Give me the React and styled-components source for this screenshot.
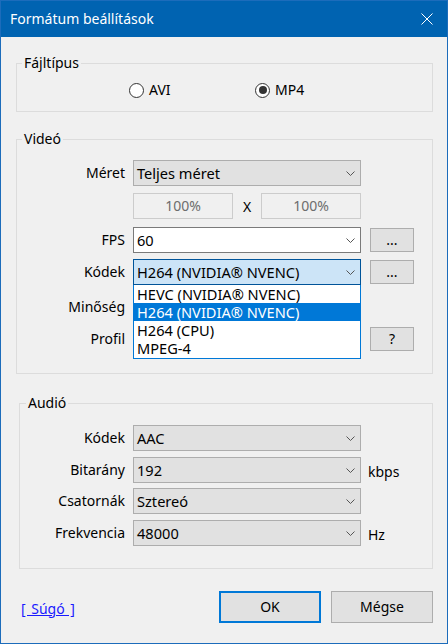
import React from 'react';
import styled, { createGlobalStyle } from 'styled-components';

const GlobalStyle = createGlobalStyle`
  html, body { margin: 0; padding: 0; background: #f0f0f0; }
  body {
    font-family: "Noto Sans", "DejaVu Sans", sans-serif;
    font-size: 14px;
    color: #000;
  }
  * { box-sizing: border-box; }
`;

const Window = styled.div`
  width: 448px;
  height: 644px;
  border: 1px solid #1c6cbb;
  background: #f0f0f0;
  display: flex;
  flex-direction: column;
`;

const TitleBar = styled.div`
  height: 36px;
  flex: none;
  background: #0063b1;
  display: flex;
  align-items: center;
  padding-left: 9px;
  color: #fff;
`;

const Title = styled.div`
  flex: 1;
  font-size: 14px;
  line-height: 18px;
`;

const CloseButton = styled.div`
  width: 40px;
  height: 36px;
  display: flex;
  align-items: center;
  justify-content: center;
`;

const Body = styled.div`
  flex: 1;
  padding: 18px 14px 0 15px;
  display: flex;
  flex-direction: column;
`;

const Group = styled.fieldset`
  margin: ${p => p.$top || 0}px 0 0 ${p => p.$inset || 0}px;
  padding: ${p => p.$pt}px 0 ${p => p.$pb}px 0;
  border: 1px solid #dcdcdc;
  min-width: 0;
`;

const Legend = styled.legend`
  margin-left: ${p => p.$offset}px;
  padding: 0 2px;
  line-height: 16px;
  font-size: 14px;
`;

const RadioRow = styled.div`
  display: grid;
  grid-template-columns: 126px 126px;
  padding-left: 112px;
  height: 16px;
`;

const RadioItem = styled.label`
  display: flex;
  align-items: center;
  gap: 5px;
  line-height: 16px;
`;

const RadioCircle = styled.span`
  width: 15px;
  height: 15px;
  border-radius: 50%;
  border: 1px solid #333;
  background: #fff;
  display: flex;
  align-items: center;
  justify-content: center;
  &::after {
    content: "";
    width: 8px;
    height: 8px;
    border-radius: 50%;
    background: ${p => (p.$checked ? '#333' : 'transparent')};
  }
`;

const Row = styled.div`
  display: grid;
  grid-template-columns: ${p => p.$labelWidth}px 228px auto;
  column-gap: 7px;
  height: 26px;
  margin-top: ${p => p.$mt || 0}px;
`;

const Label = styled.div`
  text-align: right;
  padding-right: 1px;
  align-self: center;
  line-height: 18px;
  white-space: nowrap;
`;

const selectVariants = {
  gray: { bg: '#e1e1e1', border: '#adadad' },
  white: { bg: '#ffffff', border: '#7a7a7a' },
  focus: { bg: '#cce4f7', border: '#005499' },
};

const SelectBox = styled.div`
  position: relative;
  height: 26px;
  display: flex;
  align-items: center;
  justify-content: space-between;
  padding: 0 5px 0 3px;
  border: 1px solid ${p => selectVariants[p.$variant].border};
  background: ${p => selectVariants[p.$variant].bg};
  line-height: 18px;
  font-size: 14.6px;
`;

const DropList = styled.div`
  position: absolute;
  left: -1px;
  right: -1px;
  top: calc(100% + 1px);
  background: #fff;
  border: 1px solid #0078d7;
  border-top: none;
  padding-bottom: 1px;
  z-index: 2;
`;

const DropItem = styled.div`
  height: 18px;
  line-height: 18px;
  padding-left: 3px;
  background: ${p => (p.$selected ? '#0078d7' : 'transparent')};
  color: ${p => (p.$selected ? '#fff' : '#000')};
  white-space: nowrap;
`;

const SizePair = styled.div`
  display: grid;
  grid-template-columns: 100px 1fr 100px;
  align-items: center;
`;

const Edit = styled.div`
  height: 26px;
  border: 1px solid #cccccc;
  background: #f0f0f0;
  color: #6d6d6d;
  display: flex;
  align-items: center;
  justify-content: center;
  line-height: 18px;
`;

const Times = styled.div`
  text-align: center;
  line-height: 18px;
  padding-top: 2px;
`;

const SmallButton = styled.div`
  width: 44px;
  height: 24px;
  margin: 1px 0 0 2px;
  border: 1px solid #adadad;
  background: #e1e1e1;
  display: flex;
  align-items: center;
  justify-content: center;
  line-height: 18px;
`;

const Unit = styled.div`
  align-self: center;
  line-height: 18px;
  padding-top: 3px;
`;

const Footer = styled.div`
  display: flex;
  align-items: center;
  margin-top: 22px;
`;

const HelpLink = styled.a`
  margin: 3px 0 0 5px;
  color: #1a1aff;
  text-decoration: underline;
  line-height: 18px;
  word-spacing: 2px;
  cursor: pointer;
`;

const Buttons = styled.div`
  margin-left: auto;
  display: flex;
  gap: 10px;
`;

const DialogButton = styled.div`
  width: 102px;
  height: 32px;
  display: flex;
  align-items: center;
  justify-content: center;
  background: #e1e1e1;
  border: ${p => (p.$default ? '2px solid #0078d7' : '1px solid #adadad')};
  line-height: 18px;
`;

const Chevron = () => (
  <svg width="9" height="5" viewBox="0 0 9 5">
    <path d="M0.5 0.5 L4.5 4.5 L8.5 0.5" fill="none" stroke="#555" strokeWidth="1" />
  </svg>
);

const Select = ({ value, variant = 'gray', children }) => (
  <SelectBox $variant={variant}>
    <span>{value}</span>
    <Chevron />
    {children}
  </SelectBox>
);

const codecs = ['HEVC (NVIDIA® NVENC)', 'H264 (NVIDIA® NVENC)', 'H264 (CPU)', 'MPEG-4'];

export default function App() {
  const V = 109;
  const A = 106;
  return (
    <>
      <GlobalStyle />
      <Window>
        <TitleBar>
          <Title>Formátum beállítások</Title>
          <CloseButton>
            <svg width="12" height="12" viewBox="0 0 12 12">
              <path d="M0.5 0.5 L11.5 11.5 M11.5 0.5 L0.5 11.5" stroke="#fff" strokeWidth="1" />
            </svg>
          </CloseButton>
        </TitleBar>
        <Body>
          <Group $pt={11} $pb={13}>
            <Legend $offset={5}>Fájltípus</Legend>
            <RadioRow>
              <RadioItem><RadioCircle />AVI</RadioItem>
              <RadioItem><RadioCircle $checked />MP4</RadioItem>
            </RadioRow>
          </Group>

          <Group $top={19} $pt={13} $pb={21}>
            <Legend $offset={5}>Videó</Legend>
            <Row $labelWidth={V}>
              <Label>Méret</Label>
              <Select value="Teljes méret" />
            </Row>
            <Row $labelWidth={V} $mt={7}>
              <span />
              <SizePair>
                <Edit>100%</Edit>
                <Times>X</Times>
                <Edit>100%</Edit>
              </SizePair>
            </Row>
            <Row $labelWidth={V} $mt={8}>
              <Label>FPS</Label>
              <Select value="60" variant="white" />
              <SmallButton>...</SmallButton>
            </Row>
            <Row $labelWidth={V} $mt={6}>
              <Label>Kódek</Label>
              <Select value="H264 (NVIDIA® NVENC)" variant="focus">
                <DropList>
                  {codecs.map((c, i) => (
                    <DropItem key={c} $selected={i === 1}>{c}</DropItem>
                  ))}
                </DropList>
              </Select>
              <SmallButton>...</SmallButton>
            </Row>
            <Row $labelWidth={V} $mt={9}>
              <Label>Minőség</Label>
            </Row>
            <Row $labelWidth={V} $mt={6}>
              <Label>Profil</Label>
              <span />
              <SmallButton>?</SmallButton>
            </Row>
          </Group>

          <Group $top={21} $inset={3} $pt={14} $pb={22}>
            <Legend $offset={6}>Audió</Legend>
            <Row $labelWidth={A}>
              <Label>Kódek</Label>
              <Select value="AAC" />
            </Row>
            <Row $labelWidth={A} $mt={6}>
              <Label>Bitarány</Label>
              <Select value="192" />
              <Unit>kbps</Unit>
            </Row>
            <Row $labelWidth={A} $mt={5}>
              <Label>Csatornák</Label>
              <Select value="Sztereó" />
            </Row>
            <Row $labelWidth={A} $mt={6}>
              <Label>Frekvencia</Label>
              <Select value="48000" />
              <Unit>Hz</Unit>
            </Row>
          </Group>

          <Footer>
            <HelpLink>[ Súgó ]</HelpLink>
            <Buttons>
              <DialogButton $default>OK</DialogButton>
              <DialogButton>Mégse</DialogButton>
            </Buttons>
          </Footer>
        </Body>
      </Window>
    </>
  );
}
